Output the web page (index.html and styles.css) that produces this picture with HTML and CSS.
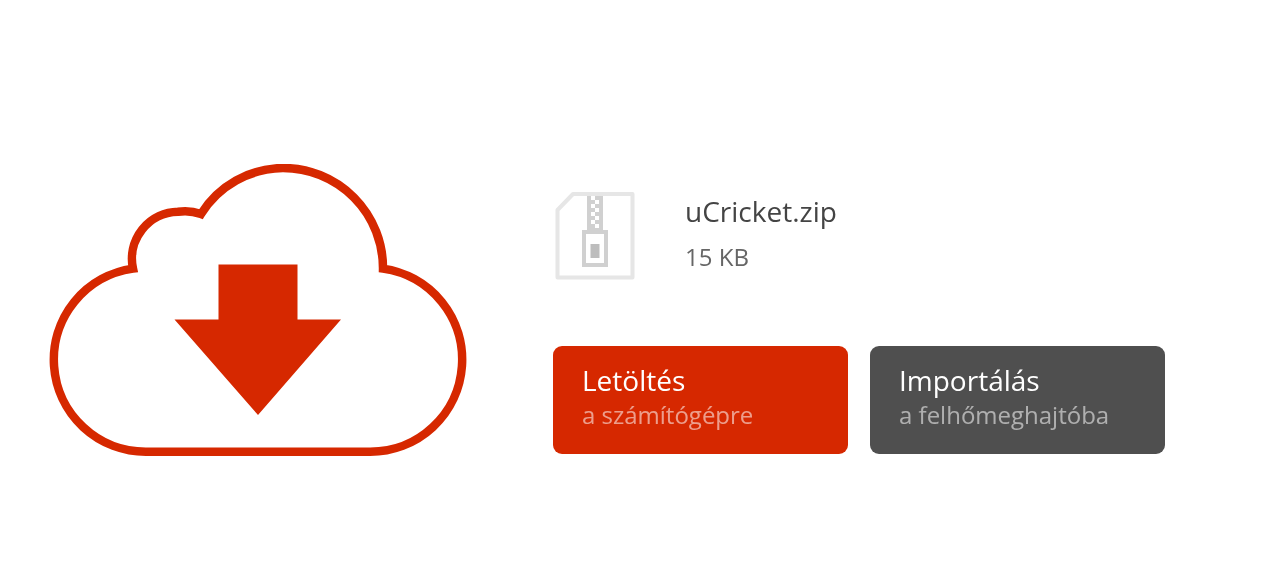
FILE: index.html
```html
<!DOCTYPE html>
<html lang="hu">
<head>
  <meta charset="UTF-8" />
  <title>uCricket.zip letöltése</title>
  <link rel="stylesheet" href="styles.css">
</head>
<body>

<div class="page">

  <!-- Felhő ikon -->
  <svg class="cloud" width="420" height="296" viewBox="48 164 420 296">
    <path class="cloud-line" d="M146 451.7H370A92 92 0 0 0 383 268.6A100 100 0 0 0 283 168A98 98 0 0 0 201 214A47 47 0 0 0 178 211.7A47 47 0 0 0 133 268.6A92 92 0 0 0 146 451.7Z"/>
    <path class="cloud-arrow" d="M218.5 264.5H297.5V319.5H341L258 415L174.5 319.5H218.5Z"/>
  </svg>

  <div class="details">
    <div class="file">
      <svg class="file-icon" width="80" height="90" viewBox="555 191 80 90">
        <path class="file-outline" d="M573 194H632.5V277.5H557.5V210Z"/>
        <path class="file-zip" d="M587 196H603V230H608V267H582V230H587Z"/>
        <path class="file-zip-in" d="M586 234H604V263H586Z"/>
        <path class="file-zip-dark" d="M590.5 244H599.5V258H590.5Z"/>
        <path class="file-teeth" d="M591 196h4v4h-4zM595 200h4v4h-4zM591 204h4v4h-4zM595 208h4v4h-4zM591 212h4v4h-4zM595 216h4v4h-4zM591 220h4v4h-4zM595 224h4v4h-4z"/>
      </svg>
      <div class="file-info">
        <div class="file-name">uCricket.zip</div>
        <div class="file-size">15 KB</div>
      </div>
    </div>

    <div class="buttons">
      <a class="btn btn-red" href="#">
        <span class="btn-title">Letöltés</span>
        <span class="btn-sub">a számítógépre</span>
      </a>
      <a class="btn btn-dark" href="#">
        <span class="btn-title">Importálás</span>
        <span class="btn-sub">a felhőmeghajtóba</span>
      </a>
    </div>
  </div>

</div>

</body>
</html>
```

FILE: styles.css
```css
html, body {
  margin: 0;
  height: 100%;
  background-color: #fff;
  overflow: hidden;
}
body {
  font-family: "Open Sans", Arial, sans-serif;
}
.page {
  display: flex;
  align-items: flex-start;
  padding: 164px 0 0 48px;
  filter: blur(0.6px);
}
.cloud {
  flex: none;
  display: block;
}
.cloud-line {
  fill: none;
  stroke: #d62800;
  stroke-width: 8.5;
}
.cloud-arrow {
  fill: #d62800;
}
.details {
  margin: 27px 0 0 85px;
}
.file {
  display: flex;
  align-items: flex-start;
  margin-left: 2px;
}
.file-icon {
  flex: none;
  display: block;
}
.file-outline {
  fill: #fff;
  stroke: #e6e6e6;
  stroke-width: 4;
  stroke-linejoin: round;
}
.file-zip {
  fill: #d0d0d0;
}
.file-zip-in, .file-teeth {
  fill: #fff;
}
.file-zip-dark {
  fill: #bdbdbd;
}
.file-info {
  margin: 1px 0 0 50px;
}
.file-name {
  font-size: 28px;
  line-height: 38px;
  color: #444;
}
.file-size {
  font-size: 24px;
  line-height: 32px;
  margin-top: 11px;
  color: #666;
}
.buttons {
  display: flex;
  gap: 22px;
  margin-top: 65px;
}
.btn {
  display: flex;
  flex-direction: column;
  box-sizing: border-box;
  width: 295px;
  height: 108px;
  padding: 15px 29px 0;
  border-radius: 9px;
  text-decoration: none;
  color: #fff;
}
.btn-red {
  background-color: #d62800;
}
.btn-dark {
  background-color: #4f4f4f;
}
.btn-title {
  font-size: 28px;
  line-height: 38px;
}
.btn-sub {
  font-size: 24px;
  line-height: 32px;
  color: rgba(255, 255, 255, 0.55);
}
```
